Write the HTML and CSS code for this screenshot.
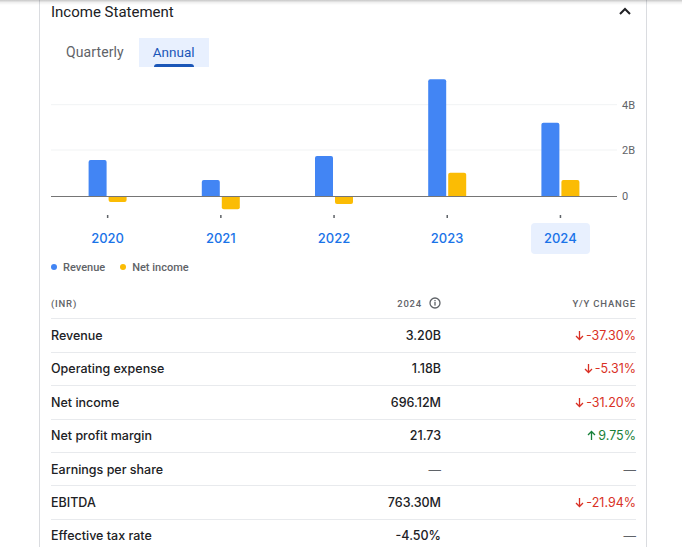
FILE: index.html
```html
<!DOCTYPE html>
<html lang="en">
<head>
<meta charset="utf-8">
<title>Income Statement</title>
<link rel="stylesheet" href="styles.css">
</head>
<body>
<div class="topshade"></div>
<section class="card">
  <header class="card-head">
    <h2 class="title">Income Statement</h2>
    <svg class="chev" width="16" height="16" viewBox="0 0 16 16"><polyline points="3,10 8,5 13,10" fill="none" stroke="#202124" stroke-width="2"/></svg>
  </header>
  <div class="tabs">
    <button class="tab">Quarterly</button>
    <button class="tab active">Annual</button>
  </div>
  <div class="chart">
    <svg class="plot" width="584" height="152" viewBox="0 0 584 152">
      <line x1="0" y1="34.7" x2="566" y2="34.7" stroke="#f1f3f4" stroke-width="1"/>
      <line x1="0" y1="80" x2="566" y2="80" stroke="#f1f3f4" stroke-width="1"/>
      <g fill="#4285f4">
        <path d="M37.6,126 V92 Q37.6,90 39.6,90 H53.6 Q55.6,90 55.6,92 V126 Z"/>
        <path d="M150.8,126 V112 Q150.8,110 152.8,110 H166.8 Q168.8,110 168.8,112 V126 Z"/>
        <path d="M264,126 V88 Q264,86 266,86 H280 Q282,86 282,88 V126 Z"/>
        <path d="M377.2,126 V11.3 Q377.2,9.3 379.2,9.3 H393.2 Q395.2,9.3 395.2,11.3 V126 Z"/>
        <path d="M490.4,126 V54.7 Q490.4,52.7 492.4,52.7 H506.4 Q508.4,52.7 508.4,54.7 V126 Z"/>
      </g>
      <g fill="#fbbc04">
        <path d="M57.6,126 V130 Q57.6,132 59.6,132 H73.6 Q75.6,132 75.6,130 V126 Z"/>
        <path d="M170.8,126 V137.3 Q170.8,139.3 172.8,139.3 H186.8 Q188.8,139.3 188.8,137.3 V126 Z"/>
        <path d="M284,126 V132 Q284,134 286,134 H300 Q302,134 302,132 V126 Z"/>
        <path d="M397.2,126 V104.7 Q397.2,102.7 399.2,102.7 H413.2 Q415.2,102.7 415.2,104.7 V126 Z"/>
        <path d="M510.4,126 V112 Q510.4,110 512.4,110 H526.4 Q528.4,110 528.4,112 V126 Z"/>
      </g>
      <line x1="0" y1="126.5" x2="566" y2="126.5" stroke="#757575" stroke-width="1.2"/>
      <g fill="#5f6368">
        <rect x="55.9" y="145" width="1.5" height="3"/>
        <rect x="169.1" y="145" width="1.5" height="3"/>
        <rect x="282.3" y="145" width="1.5" height="3"/>
        <rect x="395.5" y="145" width="1.5" height="3"/>
        <rect x="508.7" y="145" width="1.5" height="3"/>
      </g>
      <g class="ylab" fill="#5f6368">
        <text x="571" y="38.5">4B</text>
        <text x="571" y="84">2B</text>
        <text x="571" y="130">0</text>
      </g>
    </svg>
    <div class="years">
      <div class="year"><span>2020</span></div>
      <div class="year"><span>2021</span></div>
      <div class="year"><span>2022</span></div>
      <div class="year"><span>2023</span></div>
      <div class="year"><span class="sel">2024</span></div>
    </div>
  </div>
  <div class="legend">
    <span class="dot blue"></span><span class="lg">Revenue</span>
    <span class="dot yellow"></span><span class="lg">Net income</span>
  </div>
  <div class="fin">
    <div class="row head">
      <div class="c1">(INR)</div>
      <div class="c2">2024
        <svg class="info" width="12" height="12" viewBox="0 0 12 12"><circle cx="6" cy="6" r="5" fill="none" stroke="#5f6368" stroke-width="1.3"/><rect x="5.35" y="5" width="1.3" height="3.6" fill="#5f6368"/><rect x="5.35" y="3" width="1.3" height="1.3" fill="#5f6368"/></svg>
      </div>
      <div class="c3">Y/Y change</div>
    </div>
    <div class="row">
      <div class="c1">Revenue</div>
      <div class="c2">3.20B</div>
      <div class="c3 down"><svg class="arr" width="9" height="11" viewBox="0 0 9 11"><path d="M4.5,1 V9.5 M1,6 L4.5,9.5 L8,6" fill="none" stroke="currentColor" stroke-width="1.3"/></svg>-37.30%</div>
    </div>
    <div class="row">
      <div class="c1">Operating expense</div>
      <div class="c2">1.18B</div>
      <div class="c3 down"><svg class="arr" width="9" height="11" viewBox="0 0 9 11"><path d="M4.5,1 V9.5 M1,6 L4.5,9.5 L8,6" fill="none" stroke="currentColor" stroke-width="1.3"/></svg>-5.31%</div>
    </div>
    <div class="row">
      <div class="c1">Net income</div>
      <div class="c2">696.12M</div>
      <div class="c3 down"><svg class="arr" width="9" height="11" viewBox="0 0 9 11"><path d="M4.5,1 V9.5 M1,6 L4.5,9.5 L8,6" fill="none" stroke="currentColor" stroke-width="1.3"/></svg>-31.20%</div>
    </div>
    <div class="row">
      <div class="c1">Net profit margin</div>
      <div class="c2">21.73</div>
      <div class="c3 up"><svg class="arr" width="9" height="11" viewBox="0 0 9 11"><path d="M4.5,10 V1.5 M1,5 L4.5,1.5 L8,5" fill="none" stroke="currentColor" stroke-width="1.3"/></svg>9.75%</div>
    </div>
    <div class="row">
      <div class="c1">Earnings per share</div>
      <div class="c2 dash">—</div>
      <div class="c3 dash">—</div>
    </div>
    <div class="row">
      <div class="c1">EBITDA</div>
      <div class="c2">763.30M</div>
      <div class="c3 down"><svg class="arr" width="9" height="11" viewBox="0 0 9 11"><path d="M4.5,1 V9.5 M1,6 L4.5,9.5 L8,6" fill="none" stroke="currentColor" stroke-width="1.3"/></svg>-21.94%</div>
    </div>
    <div class="row">
      <div class="c1">Effective tax rate</div>
      <div class="c2">-4.50%</div>
      <div class="c3 dash">—</div>
    </div>
  </div>
</section>
</body>
</html>
```

FILE: styles.css
```css
* { box-sizing: border-box; }
html, body {
  margin: 0;
  padding: 0;
  background: #fff;
  font-family: Roboto, "Noto Sans", Arial, sans-serif;
  color: #202124;
  overflow: hidden;
}
.topshade {
  position: absolute;
  top: 0;
  left: 0;
  right: 0;
  height: 5px;
  background: linear-gradient(to bottom, rgba(0,0,0,0.22), rgba(0,0,0,0.06) 50%, rgba(0,0,0,0));
  z-index: 5;
}
.card {
  margin-left: 39px;
  width: 608px;
  border-left: 1px solid #dadce0;
  border-right: 1px solid #dadce0;
  padding: 2px 10px 0 11px;
  height: 547px;
}
.card-head {
  display: flex;
  justify-content: space-between;
  align-items: center;
  height: 20px;
}
.title {
  margin: 0;
  font-size: 15px;
  font-weight: 400;
  line-height: 20px;
  color: #202124;
}
.chev { margin-right: 3px; margin-top: 0; }
.tabs {
  display: flex;
  margin-top: 16px;
  height: 29px;
}
.tab {
  position: relative;
  border: 0;
  background: transparent;
  font-family: inherit;
  font-size: 14px;
  color: #5f6368;
  padding: 0 15px;
  height: 29px;
  line-height: 29px;
  letter-spacing: 0.1px;
}
.tab.active {
  background: #e8f0fe;
  color: #1a56b8;
  font-weight: 400;
  font-size: 13.5px;
  letter-spacing: 0;
  padding: 0 14px;
}
.tab.active::after {
  content: "";
  position: absolute;
  left: 15px;
  right: 15px;
  bottom: 0;
  height: 3px;
  border-radius: 3px 3px 0 0;
  background: #1a56b8;
}
.chart { margin-top: 3px; }
.plot { display: block; }
.ylab text { font-size: 11px; font-family: Roboto, Arial, sans-serif; }
.years {
  display: flex;
  width: 566px;
  height: 31px;
  margin-top: 1px;
}
.year {
  flex: 0 0 113.2px;
  display: flex;
  justify-content: center;
}
.year span {
  display: block;
  padding: 0 13px;
  line-height: 31px;
  font-family: Inter, Roboto, sans-serif;
  font-size: 13px;
  font-weight: 500;
  color: #1a73e8;
  border-radius: 4px;
}
.year span.sel { background: #e8f0fe; }
.legend {
  display: flex;
  align-items: center;
  height: 16px;
  margin-top: 5px;
  font-size: 11px;
  font-weight: 500;
  color: #5f6368;
}
.dot {
  width: 6px;
  height: 6px;
  border-radius: 50%;
  margin-right: 6px;
}
.dot.blue { background: #4285f4; }
.dot.yellow { background: #fbbc04; margin-left: 15px; }
.fin { margin-top: 11px; }
.row {
  display: grid;
  grid-template-columns: 1fr 120px 195px;
  align-items: center;
  height: 33.4px;
  border-bottom: 1px solid #e8eaed;
  font-family: Inter, Roboto, sans-serif;
  font-size: 12.5px;
  font-weight: 500;
  color: #202124;
}
.row .c2, .row .c3 { text-align: right; }
.row.head {
  font-family: Roboto, sans-serif;
  font-size: 9.5px;
  letter-spacing: 0.8px;
  text-transform: uppercase;
  color: #5f6368;
  font-weight: 500;
  padding-top: 2px;
}
.row.head .c2 { display: flex; justify-content: flex-end; align-items: center; gap: 7px; }
.info { display: block; }
.c3 { display: flex; justify-content: flex-end; align-items: center; }
.arr { margin-right: 2px; }
.down { color: #d93025; font-weight: 400; }
.up { color: #188038; font-weight: 400; }
.dash { color: #5f6368; font-weight: 400; }
```
